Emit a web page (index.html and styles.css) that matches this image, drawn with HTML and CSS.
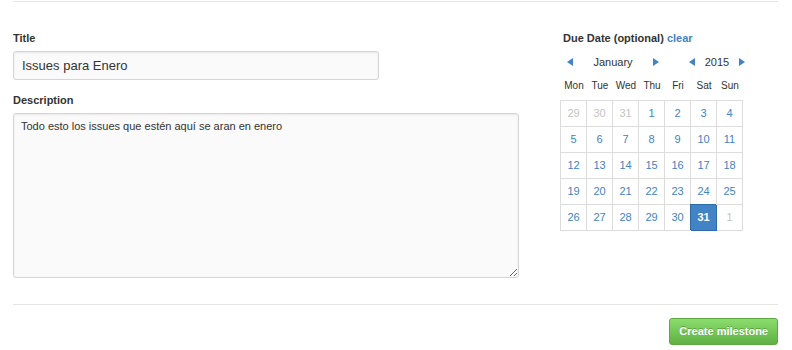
FILE: index.html
```html
<!DOCTYPE html>
<html lang="en">
<head>
    <meta charset="UTF-8">
    <meta name="viewport" content="width=device-width, initial-scale=1.0">
    <link rel="stylesheet" href="styles.css">
</head>
<body>
    <div class="container">
        <div class="rule top-rule"></div>

        <form class="milestone-form">
            <div class="columns">
                <div class="main-col">
                    <div class="form-group">
                        <label for="title">Title</label>
                        <input type="text" id="title" class="title-input" value="Issues para Enero">
                    </div>
                    <div class="form-group">
                        <label for="description">Description</label>
                        <textarea id="description" class="desc-input">Todo esto los issues que estén aquí se aran en enero</textarea>
                    </div>
                </div>

                <div class="side-col">
                    <label class="due-label">Due Date (optional) <a href="#" class="clear-link">clear</a></label>
                    <div class="cal-nav">
                        <span class="arrow arrow-left month-prev"></span>
                        <span class="cal-month">January</span>
                        <span class="arrow arrow-right"></span>
                        <span class="arrow arrow-left year-prev"></span>
                        <span class="cal-year">2015</span>
                        <span class="arrow arrow-right"></span>
                    </div>
                    <div class="cal-days">
                        <span>Mon</span><span>Tue</span><span>Wed</span><span>Thu</span><span>Fri</span><span>Sat</span><span>Sun</span>
                    </div>
                    <div class="cal-grid">
                        <span class="muted">29</span><span class="muted">30</span><span class="muted">31</span><span>1</span><span>2</span><span>3</span><span>4</span>
                        <span>5</span><span>6</span><span>7</span><span>8</span><span>9</span><span>10</span><span>11</span>
                        <span>12</span><span>13</span><span>14</span><span>15</span><span>16</span><span>17</span><span>18</span>
                        <span>19</span><span>20</span><span>21</span><span>22</span><span>23</span><span>24</span><span>25</span>
                        <span>26</span><span>27</span><span>28</span><span>29</span><span>30</span><span class="selected">31</span><span class="muted">1</span>
                    </div>
                </div>
            </div>

            <div class="rule"></div>

            <div class="form-actions">
                <button type="submit" class="btn-primary">Create milestone</button>
            </div>
        </form>
    </div>
</body>
</html>
```

FILE: styles.css
```css
* {
    box-sizing: border-box;
}
body {
    margin: 0;
    font-family: "Liberation Sans", Helvetica, Arial, sans-serif;
    font-size: 11px;
    color: #333;
    background-color: #fff;
}
.container {
    padding: 0 14px 0 13px;
}
.rule {
    border-top: 1px solid #e5e5e5;
}
.top-rule {
    margin-top: 1px;
}
.columns {
    display: flex;
    gap: 41px;
    padding-top: 29px;
    margin-bottom: 26px;
}
.main-col {
    width: 506px;
}
.side-col {
    flex: 1;
}
.form-group {
    margin-bottom: 13px;
}
.form-group:last-child {
    margin-bottom: 0;
}
label {
    display: block;
    font-weight: bold;
    line-height: 15px;
    margin-bottom: 5px;
}
.due-label {
    padding-left: 3px;
}
.title-input,
.desc-input {
    display: block;
    font-family: inherit;
    color: #333;
    background-color: #fafafa;
    border: 1px solid #d5d5d5;
    border-radius: 3px;
    box-shadow: inset 0 1px 2px rgba(0,0,0,0.075);
    outline: none;
}
.title-input {
    width: 366px;
    height: 29px;
    padding: 6px 8px;
    font-size: 13px;
    line-height: 15px;
}
.desc-input {
    width: 506px;
    height: 165px;
    padding: 6px 7px;
    font-size: 11px;
}
.clear-link {
    color: #4183c4;
    text-decoration: none;
}

/* Calendar */
.cal-nav {
    display: flex;
    align-items: center;
    height: 24px;
    margin-top: -1px;
    font-size: 11px;
}
.arrow {
    width: 0;
    height: 0;
    border-top: 4px solid transparent;
    border-bottom: 4px solid transparent;
}
.arrow-left {
    border-right: 6px solid #4183c4;
}
.arrow-right {
    border-left: 6px solid #4183c4;
}
.month-prev {
    margin-left: 7px;
}
.cal-month {
    width: 80px;
    text-align: center;
}
.year-prev {
    margin-left: 30px;
}
.cal-year {
    width: 44px;
    text-align: center;
}
.cal-days {
    display: grid;
    grid-template-columns: repeat(7, 26px);
    padding-left: 1px;
    height: 24px;
    line-height: 24px;
    font-size: 10px;
    text-align: center;
    margin-bottom: 2px;
}
.cal-grid {
    display: grid;
    grid-template-columns: repeat(7, 26px);
    grid-auto-rows: 26px;
    width: 183px;
    border-top: 1px solid #ddd;
    border-left: 1px solid #ddd;
}
.cal-grid span {
    border-right: 1px solid #ddd;
    border-bottom: 1px solid #ddd;
    text-align: center;
    line-height: 25px;
    color: #4183c4;
}
.cal-grid .muted {
    color: #c3c3c3;
}
.cal-grid .selected {
    background-color: #4183c4;
    border-color: #2f6cab;
    box-shadow: -1px -1px 0 0 #2f6cab;
    color: #fff;
    font-weight: bold;
}

.form-actions {
    display: flex;
    justify-content: flex-end;
    padding-top: 13px;
}
.btn-primary {
    font-family: inherit;
    font-size: 11px;
    font-weight: bold;
    line-height: 13px;
    padding: 6px 9px;
    color: #fff;
    text-shadow: 0 -1px 0 rgba(0,0,0,0.25);
    background: linear-gradient(#8add6d, #60b044);
    border: 1px solid #5ca941;
    border-radius: 3px;
    cursor: pointer;
}
```
